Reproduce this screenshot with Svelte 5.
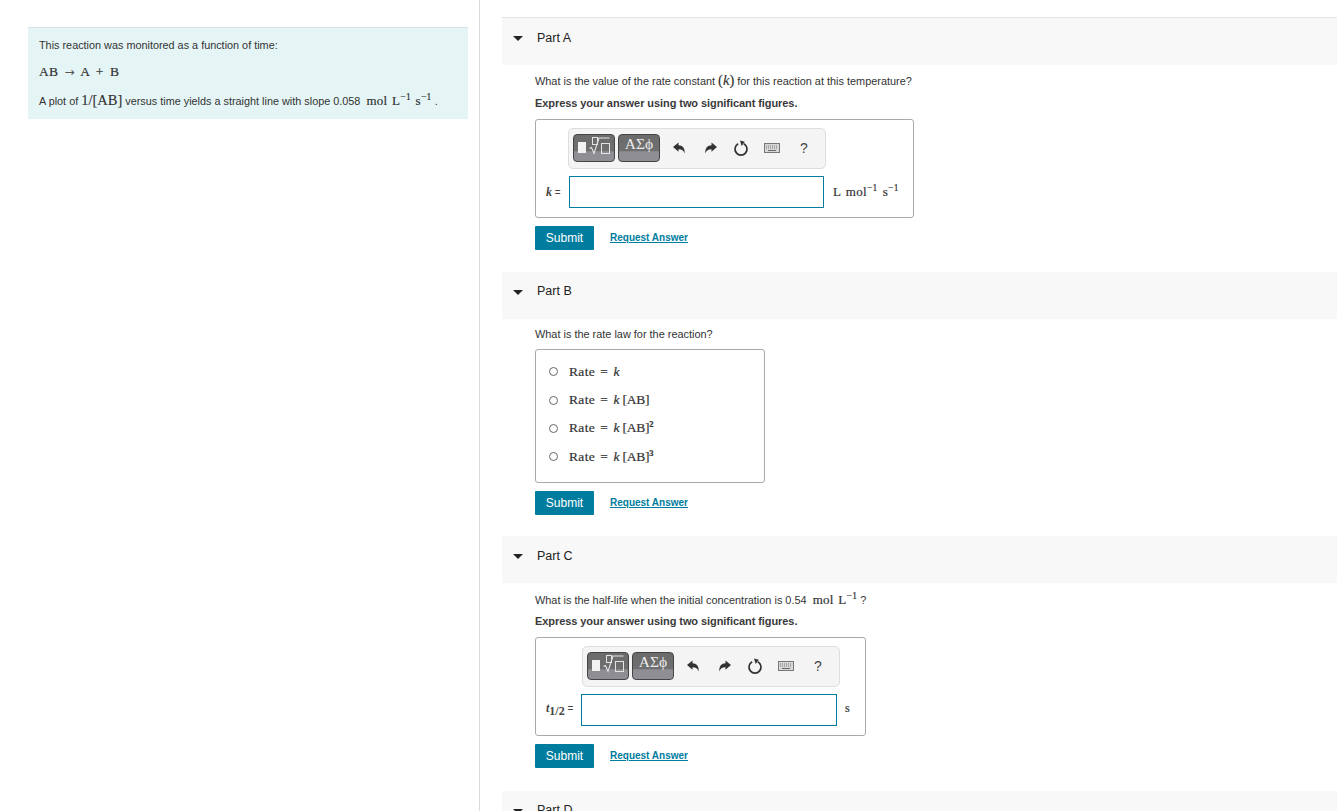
<script>
  const rates = [
    { sup: null, ab: false },
    { sup: null, ab: true },
    { sup: '2', ab: true },
    { sup: '3', ab: true }
  ];
</script>

{#snippet toolbar()}
  <div class="toolbar">
    <div class="tbtn first">
      <span class="solid"></span>
      <svg class="radical" width="26" height="22" viewBox="0 0 26 22" aria-hidden="true">
        <rect x="5.5" y="2.5" width="5" height="7" fill="none" stroke="#e4e4e4" />
        <path d="M2.5 13.5 L4.5 12.5 L7 18.5 L12 3 H22.5" fill="none" stroke="#e4e4e4" stroke-width="1.1" />
        <rect x="14.5" y="8.5" width="8" height="10" fill="none" stroke="#e4e4e4" />
      </svg>
    </div>
    <div class="tbtn greek"><span>ΑΣϕ</span></div>
    <div class="tools">
      <svg width="14" height="14" viewBox="0 0 14 14" aria-hidden="true"><path d="M1 6 L6.5 1.5 V4.3 C10.5 4.3 13 7 12.6 12.5 C11.5 9.5 10 8.2 6.5 8.2 V10.8 Z" fill="#333" /></svg>
      <svg width="14" height="14" viewBox="0 0 14 14" aria-hidden="true"><path d="M13 6 L7.5 1.5 V4.3 C3.5 4.3 1 7 1.4 12.5 C2.5 9.5 4 8.2 7.5 8.2 V10.8 Z" fill="#333" /></svg>
      <svg width="16" height="17" viewBox="0 0 16 17" aria-hidden="true"><path d="M5.2 3.8 A6 6 0 1 0 10.8 3.8" fill="none" stroke="#333" stroke-width="1.7" /><path d="M7 0.5 L11.8 1.8 L8.6 6 Z" fill="#333" /></svg>
      <svg width="16" height="10" viewBox="0 0 16 10" aria-hidden="true"><rect x="0.5" y="0.5" width="15" height="9" fill="#d8d8d8" stroke="#777" /><path d="M2 3 H14 M2 5 H14" stroke="#777" stroke-dasharray="1 1" /><path d="M4 7.5 H12" stroke="#666" /></svg>
      <span class="help">?</span>
    </div>
  </div>
{/snippet}

{#snippet actions()}
  <div class="actions">
    <button class="submit" type="button">Submit</button>
    <a class="req" href="#answer">Request Answer</a>
  </div>
{/snippet}

{#snippet header(name)}
  <div class="phead">
    <svg class="caret" width="10" height="5" viewBox="0 0 10 5" aria-hidden="true"><path d="M0 0 H10 L5 5 Z" fill="#222" /></svg>
    <span>{name}</span>
  </div>
{/snippet}

<div class="page">
  <aside class="left">
    <div class="intro">
      <p>This reaction was monitored as a function of time:</p>
      <p class="m eq">AB <span class="arrow">→</span> A + B</p>
      <p class="last">A plot of <span class="m big">1/[AB]</span> versus time yields a straight line with slope 0.058 <span class="m unit">mol L<sup>−1</sup> s<sup>−1</sup></span> .</p>
    </div>
  </aside>

  <main class="right">
    <section class="part a">
      {@render header('Part A')}
      <div class="body">
        <p class="q">What is the value of the rate constant <span class="m big">(<i>k</i>)</span> for this reaction at this temperature?</p>
        <p class="note">Express your answer using two significant figures.</p>
        <div class="box box-a">
          <div class="tbwrap">{@render toolbar()}</div>
          <div class="row">
            <span class="lbl"><i class="m">k</i> =</span>
            <div class="input"></div>
            <span class="m after">L mol<sup>−1</sup> s<sup>−1</sup></span>
          </div>
        </div>
        {@render actions()}
      </div>
    </section>

    <section class="part b">
      {@render header('Part B')}
      <div class="body">
        <p class="q">What is the rate law for the reaction?</p>
        <div class="radios">
          {#each rates as r}
            <div class="opt">
              <span class="radio"></span>
              <span class="m rate">Rate = <i>k</i>{#if r.ab}<span class="ab">&thinsp;[AB]</span>{/if}{#if r.sup}<sup>{r.sup}</sup>{/if}</span>
            </div>
          {/each}
        </div>
        {@render actions()}
      </div>
    </section>

    <section class="part c">
      {@render header('Part C')}
      <div class="body">
        <p class="q">What is the half-life when the initial concentration is 0.54 <span class="m unit">mol L<sup>−1</sup></span> ?</p>
        <p class="note">Express your answer using two significant figures.</p>
        <div class="box box-c">
          <div class="tbwrap">{@render toolbar()}</div>
          <div class="row">
            <span class="lbl"><i class="m">t</i><sub class="m">1/2</sub> =</span>
            <div class="input"></div>
            <span class="m after">s</span>
          </div>
        </div>
        {@render actions()}
      </div>
    </section>

    <section class="part d">
      {@render header('Part D')}
    </section>
  </main>
</div>

<style>
  :global(body) {
    margin: 0;
    background: #fff;
  }
  .page {
    display: flex;
    height: 811px;
    overflow: hidden;
    font-family: "Liberation Sans", Arial, sans-serif;
    font-size: 11px;
    color: #333;
  }
  p { margin: 0; }
  .m {
    font-family: "Liberation Serif", "Times New Roman", serif;
  }
  sup {
    font-size: 9.5px;
    line-height: 0;
    vertical-align: 5px;
    font-family: "Liberation Serif", serif;
  }
  .left {
    box-sizing: border-box;
    width: 480px;
    flex: none;
    border-right: 1px solid #d9dcde;
    padding: 27px 11px 0 28px;
  }
  .intro {
    box-sizing: border-box;
    height: 92px;
    background: #e5f5f6;
    border-top: 1px solid #d8e2e4;
    padding: 10px 11px 0;
  }
  .intro p { line-height: 14px; white-space: nowrap; }
  .intro > p:first-child { font-size: 10.85px; }
  .eq {
    margin-top: 13px !important;
    font-size: 13.5px;
    letter-spacing: .3px;
    color: #333;
    word-spacing: 2.5px;
    -webkit-text-stroke: .2px #333;
  }
  .arrow {
    font-family: "DejaVu Sans", sans-serif;
    font-size: 12px;
    -webkit-text-stroke: 0;
    font-weight: normal;
    color: #555;
  }
  .last {
    margin-top: 14px !important;
    font-size: 10.85px;
  }
  .big {
    font-size: 14.5px;
    -webkit-text-stroke: .15px #333;
  }
  .unit {
    font-size: 13px;
    margin-left: 3px;
    color: #333;
    letter-spacing: .3px;
    word-spacing: 1px;
    -webkit-text-stroke: .2px #333;
  }
  .right {
    flex: 1;
    min-width: 0;
    padding: 17px 0 0 22px;
  }
  .part { display: flow-root; }
  .a { border-top: 1px solid #e3e3e3; height: 254px; }
  .b { height: 264px; }
  .c { height: 255px; }
  .phead {
    box-sizing: border-box;
    height: 47px;
    background: #f8f8f8;
    display: flex;
    align-items: flex-start;
    padding: 13px 0 0 11px;
    font-size: 12.5px;
    line-height: 14px;
    color: #222;
  }
  .b .phead, .d .phead { padding-top: 12px; }
  .caret { margin: 5px 14px 0 0; }
  .b .caret, .d .caret { margin-top: 6px; }
  .body { padding-left: 33px; }
  .q {
    margin-top: 8px;
    line-height: 14px;
    white-space: nowrap;
    font-size: 10.92px;
  }
  .c .q { margin-top: 10px; }
  .note {
    margin-top: 8px;
    line-height: 14px;
    font-weight: bold;
    font-size: 11px;
    letter-spacing: -.07px;
    color: #3a3a3a;
  }
  .c .note { margin-top: 7px; }
  .box {
    box-sizing: border-box;
    margin-top: 9px;
    border: 1px solid #aaa;
    border-radius: 3px;
    height: 99px;
  }
  .box-a { width: 379px; padding: 8px 0 0 33px; }
  .box-c { width: 331px; padding: 8px 0 0 45px; }
  .tbwrap { height: 40px; margin-bottom: 8px; }
  .box-a .tbwrap { margin-left: -1px; }
  .box-c .tbwrap { margin-left: 1px; }
  .toolbar {
    box-sizing: border-box;
    width: 258px;
    height: 41px;
    background: #f4f4f4;
    border: 1px solid #dedede;
    border-radius: 5px;
    display: flex;
    align-items: flex-start;
    padding: 5px 0 0 4px;
    gap: 3px;
  }
  .tbtn {
    box-sizing: border-box;
    width: 42px;
    height: 28px;
    border: 1px solid #444;
    border-radius: 4px;
    background: linear-gradient(to bottom, #6b6b6b 0, #6f6f6f 62%, #8e8e94 64%, #8e8e94 100%);
    color: #ececec;
    display: flex;
  }
  .first { position: relative; }
  .solid {
    position: absolute;
    left: 4px;
    top: 7px;
    width: 8px;
    height: 11px;
    background: #f2f2f2;
  }
  .radical { position: absolute; left: 13px; top: 0; }
  .greek span {
    font-family: "Liberation Serif", serif;
    font-size: 15.5px;
    line-height: 18px;
    margin: 0 auto;
  }
  .tools {
    display: flex;
    align-items: center;
    height: 28px;
    margin-left: 9px;
  }
  .tools > * { flex: none; }
  .tools svg:nth-child(1) { margin-right: 18px; }
  .tools svg:nth-child(2) { margin-right: 15px; }
  .tools svg:nth-child(3) { margin-right: 15px; }
  .tools svg:nth-child(4) { margin-right: 20px; }
  .help { font-size: 14px; color: #444; }
  .row {
    display: flex;
    align-items: center;
    height: 32px;
  }
  .box-a .row { margin-left: -23px; }
  .box-c .row { margin-left: -35px; }
  .lbl {
    font-size: 10px;
    white-space: nowrap;
    color: #444;
  }
  .lbl .m { font-size: 12px; font-weight: bold; }
  .lbl sub { font-size: 9px; line-height: 0; font-weight: bold; }
  .box-a .lbl { width: 23px; }
  .box-c .lbl { width: 35px; margin-bottom: 4px; }
  .input {
    box-sizing: border-box;
    height: 32px;
    background: #fff;
    border: 1px solid #007c9e;
  }
  .box-a .input { width: 255px; }
  .box-c .input { width: 256px; }
  .after {
    margin-left: 9px;
    font-size: 13px;
    color: #333;
    white-space: nowrap;
    letter-spacing: .3px;
    word-spacing: 1.5px;
    -webkit-text-stroke: .2px #333;
  }
  .box-c .after { font-size: 12px; margin-left: 8px; margin-bottom: 3px; }
  .actions {
    display: flex;
    align-items: center;
    margin-top: 8px;
    height: 24px;
  }
  .submit {
    box-sizing: border-box;
    width: 59px;
    height: 24px;
    border: 0;
    border-radius: 1px;
    padding: 0;
    background: #007c9e;
    color: #fff;
    font: 12px "Liberation Sans", Arial, sans-serif;
  }
  .req {
    margin: 0 0 1px 16px;
    color: #007c9e;
    font-size: 10px;
    font-weight: bold;
    text-decoration: underline;
  }
  .radios {
    box-sizing: border-box;
    width: 230px;
    height: 134px;
    margin: 8px 0 0;
    border: 1px solid #aaa;
    border-radius: 3px;
    padding: 7.5px 0 0 13px;
  }
  .opt {
    display: flex;
    align-items: center;
    height: 28.4px;
  }
  .radio {
    box-sizing: border-box;
    width: 9px;
    height: 9px;
    border: 1px solid #666;
    border-radius: 50%;
    margin-right: 11px;
    flex: none;
  }
  .rate {
    font-size: 13.5px;
    color: #333;
    letter-spacing: .35px;
    word-spacing: 1.5px;
    -webkit-text-stroke: .2px #333;
  }
  .ab { letter-spacing: -.2px; }
  .rate sup { font-size: 8.5px; font-weight: bold; letter-spacing: 0; }
</style>
